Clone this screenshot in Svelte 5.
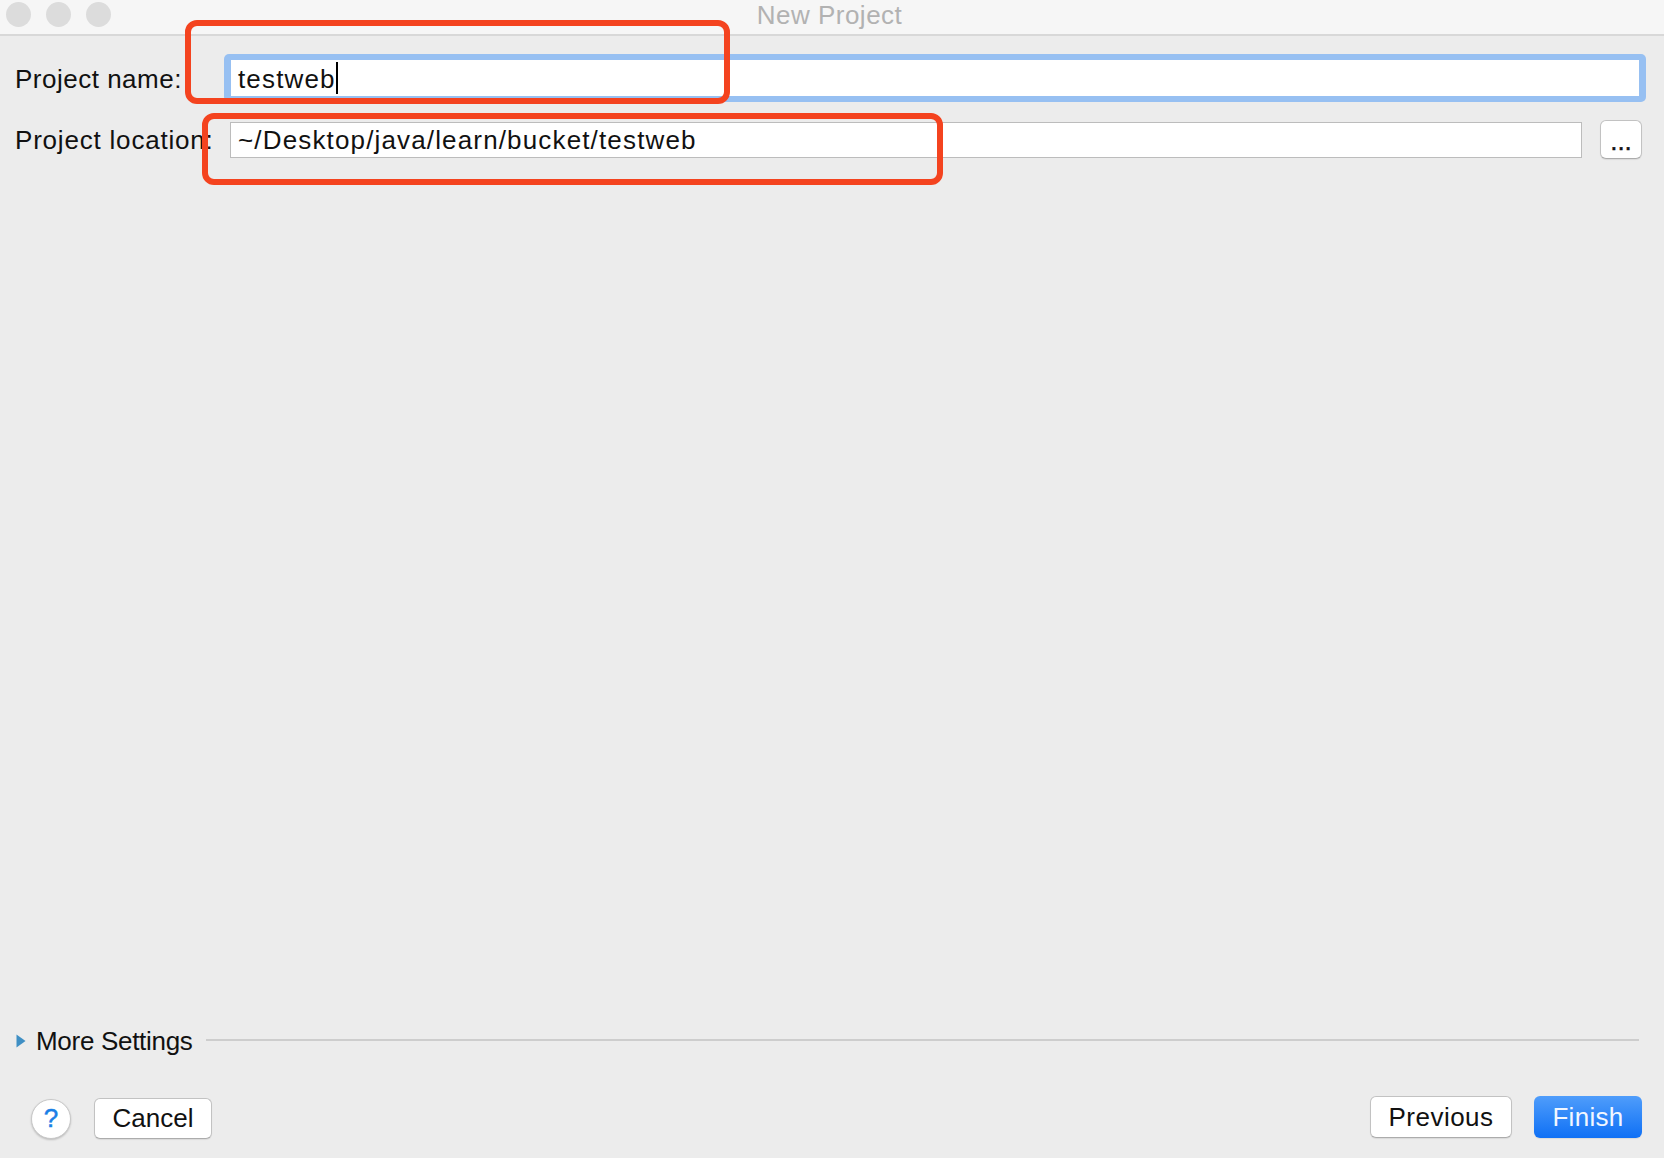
<script>
	let projectName = $state('testweb');
	let projectLocation = $state('~/Desktop/java/learn/bucket/testweb');
</script>

<div class="dialog">
	<header class="titlebar">
		<div class="lights">
			<span class="light"></span>
			<span class="light"></span>
			<span class="light"></span>
		</div>
		<span class="title">New Project</span>
	</header>

	<div class="form">
		<div class="row name-row">
			<span class="label name-label">Project name:</span>
			<div class="focus-ring">
				<div class="field">
					<span class="value">{projectName}</span><span class="caret"></span>
				</div>
			</div>
		</div>
		<div class="row location-row">
			<span class="label location-label">Project location:</span>
			<div class="field plain">{projectLocation}</div>
			<button class="btn browse">...</button>
		</div>
	</div>

	<div class="more">
		<svg class="arrow" width="10" height="14" viewBox="0 0 10 14"><path d="M0.5 0.5 L9.5 7 L0.5 13.5 Z" fill="#3f8fc4" /></svg>
		<span class="more-text">More Settings</span>
		<span class="more-line"></span>
	</div>

	<footer class="footer">
		<div class="footer-left">
			<button class="help">?</button>
			<button class="btn cancel">Cancel</button>
		</div>
		<div class="footer-right">
			<button class="btn previous">Previous</button>
			<button class="btn finish">Finish</button>
		</div>
	</footer>

	<!-- annotation boxes drawn on top of the screenshot -->
	<div class="mark mark-name"></div>
	<div class="mark mark-location"></div>
</div>

<style>
	:global(body) {
		margin: 0;
		background: #ececec;
	}

	.dialog {
		position: relative;
		display: flex;
		flex-direction: column;
		height: 1158px;
		background: #ececec;
		color: #111;
		font-family: "Liberation Sans", Arial, sans-serif;
		font-size: 26px;
		overflow: hidden;
	}

	.titlebar {
		position: relative;
		display: flex;
		align-items: center;
		justify-content: center;
		height: 34px;
		background: #f6f6f6;
		border-bottom: 2px solid #d8d8d8;
		flex-shrink: 0;
	}

	.lights {
		position: absolute;
		left: 6px;
		top: 2px;
		display: flex;
		gap: 15px;
	}

	.light {
		width: 25px;
		height: 25px;
		border-radius: 50%;
		background: #dcdcdc;
	}

	.title {
		margin-left: -5px;
		margin-top: -3px;
		color: #b2b2b2;
		letter-spacing: 0.5px;
	}

	.form {
		display: flex;
		flex-direction: column;
		gap: 18px;
		padding: 18px 18px 0 15px;
	}

	.row {
		display: flex;
		align-items: center;
	}

	.label {
		flex-shrink: 0;
		white-space: nowrap;
	}

	.name-label {
		width: 209px;
		letter-spacing: 0.5px;
		padding-top: 2px;
	}

	.location-label {
		width: 215px;
		letter-spacing: 0.8px;
		padding-top: 2px;
	}

	.focus-ring {
		flex: 1;
		padding: 6px 7px;
		background: #97c0f2;
		border-radius: 5px;
	}

	.field {
		display: flex;
		align-items: center;
		height: 36px;
		box-sizing: border-box;
		padding-left: 7px;
		background: #fff;
		white-space: pre;
		letter-spacing: 1.15px;
	}

	.field.plain {
		flex: 1;
		border: 1px solid #bcbcbc;
		padding-top: 2px;
	}

	.value {
		padding-top: 2px;
	}

	.caret {
		width: 2px;
		height: 32px;
		background: #000;
	}

	.location-row {
		padding-right: 4px;
		gap: 18px;
	}

	.location-label {
		margin-right: -18px;
	}

	.btn {
		box-sizing: border-box;
		border: 1px solid #c2c2c2;
		border-bottom-color: #acacac;
		border-radius: 6px;
		background: #fff;
		color: #111;
		font: inherit;
		padding: 0;
		box-shadow: 0 1px 1px rgba(0, 0, 0, 0.08);
	}

	.browse {
		width: 42px;
		height: 39px;
		line-height: 40px;
		font-size: 26px;
		-webkit-text-stroke: 0.4px #111;
	}

	.more {
		display: flex;
		align-items: center;
		margin-top: auto;
		padding: 0 25px 0 16px;
		height: 26px;
	}

	.arrow {
		flex-shrink: 0;
	}

	.more-text {
		margin-left: 10px;
		white-space: nowrap;
		letter-spacing: -0.3px;
	}

	.more-line {
		flex: 1;
		height: 2px;
		margin-left: 13px;
		margin-top: -2px;
		background: #cdcdcd;
	}

	.footer {
		display: flex;
		justify-content: space-between;
		align-items: flex-start;
		margin-top: 42px;
		padding: 0 22px 19px 31px;
	}

	.footer-left {
		display: flex;
		align-items: center;
		gap: 23px;
		padding-top: 2px;
	}

	.footer-right {
		display: flex;
		gap: 22px;
	}

	.help {
		width: 40px;
		height: 40px;
		padding: 0;
		border: 1px solid #c8c8c8;
		border-radius: 50%;
		background: #fff;
		color: #1a7fe6;
		font: inherit;
		-webkit-text-stroke: 0.5px #1a7fe6;
		box-shadow: 0 1px 2px rgba(0, 0, 0, 0.2);
	}

	.cancel {
		width: 118px;
		height: 41px;
	}

	.previous {
		width: 142px;
		height: 42px;
		letter-spacing: 0.5px;
	}

	.finish {
		width: 108px;
		height: 42px;
		border: none;
		background: linear-gradient(#4f9dfb, #0f70f5);
		color: #f2f7ff;
		letter-spacing: 0.3px;
	}

	.mark {
		position: absolute;
		box-sizing: border-box;
		border: 6px solid #f4431f;
		border-radius: 12px;
		pointer-events: none;
	}

	.mark-name {
		left: 185px;
		top: 20px;
		width: 545px;
		height: 84px;
	}

	.mark-location {
		left: 202px;
		top: 113px;
		width: 741px;
		height: 72px;
	}
</style>
